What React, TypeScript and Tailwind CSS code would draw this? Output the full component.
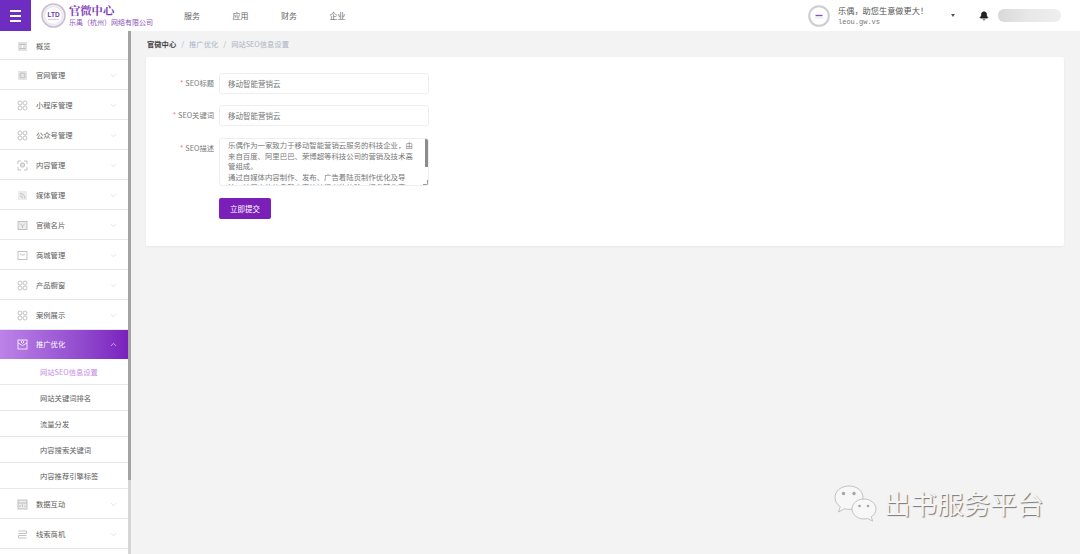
import { ChevronDown, ChevronUp, Bell } from "lucide-react";

const font = { fontFamily: '"Noto Sans CJK SC", "Liberation Sans", sans-serif' };

type IconKind = "ltd" | "site" | "grid" | "face" | "rss" | "card" | "mail" | "promo" | "data" | "lead";

function MenuIcon({ kind, active }: { kind: IconKind; active?: boolean }) {
  const c = active ? "#ffffff" : "#b4b4b4";
  const fill = active ? "none" : "#ececec";
  return (
    <svg width="11" height="11" viewBox="0 0 11 11" fill="none" stroke={c} strokeWidth="0.8">
      {kind === "ltd" && (
        <>
          <path d="M1 2h9M1 9h9" />
          <rect x="2" y="3.6" width="7" height="3.8" />
          <path d="M4 3.6v3.8M7 3.6v3.8" />
        </>
      )}
      {kind === "site" && (
        <>
          <rect x="1" y="1" width="9" height="9" fill="#e4e4e4" stroke="none" />
          <rect x="3.2" y="3.2" width="4.6" height="4.6" rx="1" />
        </>
      )}
      {kind === "grid" && (
        <>
          <circle cx="3" cy="3" r="2" />
          <circle cx="8" cy="3" r="2" />
          <circle cx="3" cy="8" r="2" />
          <circle cx="8" cy="8" r="2" />
        </>
      )}
      {kind === "face" && (
        <>
          <path d="M1 1h3M7 1h3M1 10h3M7 10h3M1 1v3M10 1v3M1 7v3M10 7v3" />
          <circle cx="5.5" cy="5" r="2.2" fill="#e4e4e4" />
        </>
      )}
      {kind === "rss" && (
        <>
          <rect x="1" y="1" width="9" height="9" fill={fill} stroke="none" />
          <path d="M3 3.500a5 5 0 0 1 5 5M3 6a2.500 2.500 0 0 1 2.500 2.500" />
        </>
      )}
      {kind === "card" && (
        <>
          <rect x="1" y="1.500" width="9" height="8" fill={fill} />
          <path d="M3 3.500l2.500 2.500L8 3.500M5.500 6v2" />
        </>
      )}
      {kind === "mail" && (
        <>
          <rect x="1" y="1.500" width="9" height="8" />
          <path d="M3 4q2.500 2.500 5 0" />
        </>
      )}
      {kind === "promo" && (
        <>
          <rect x="1" y="1" width="9" height="9" />
          <path d="M1 4l4.500 2.500L10 4M5.500 1.500l1.500 1.500-1.500 1.500L4 3z" />
        </>
      )}
      {kind === "data" && (
        <>
          <rect x="1" y="1" width="9" height="9" fill={fill} />
          <path d="M1 4h9M3 8V6M5.500 8V5.500M8 8V6.500" />
        </>
      )}
      {kind === "lead" && <path d="M1.500 2h8v2.500h-8M9.500 6.500h-8V9h8" />}
    </svg>
  );
}

function MenuRow({ icon, label, chevron = true, first }: { icon: IconKind; label: string; chevron?: boolean; first?: boolean }) {
  return (
    <div
      className={`flex shrink-0 items-center border-b border-[#e6e6e6] pt-[2px] pr-[10px] pl-[17px] text-[7.3px] text-[#5c5c5c] ${
        first ? "h-[29px]" : "h-[30px]"
      }`}
    >
      <MenuIcon kind={icon} />
      <span className="ml-[8px] flex-1">{label}</span>
      {chevron && <ChevronDown size={9} color="#c4c4c4" strokeWidth={1.2} />}
    </div>
  );
}

function SubRow({ label, active }: { label: string; active?: boolean }) {
  return (
    <div
      className={`flex h-[26px] shrink-0 items-center border-b border-[#e6e6e6] pt-[2px] pl-[40px] text-[7.3px] ${
        active ? "text-[#c68be8]" : "text-[#5c5c5c]"
      }`}
    >
      {label}
    </div>
  );
}

function Sidebar() {
  return (
    <aside className="flex h-full w-[131px] shrink-0 bg-white">
      <div className="flex w-[128px] flex-col overflow-hidden">
        <MenuRow icon="ltd" label="概览" chevron={false} first />
        <MenuRow icon="site" label="官网管理" />
        <MenuRow icon="grid" label="小程序管理" />
        <MenuRow icon="grid" label="公众号管理" />
        <MenuRow icon="face" label="内容管理" />
        <MenuRow icon="rss" label="媒体管理" />
        <MenuRow icon="card" label="官微名片" />
        <MenuRow icon="mail" label="商城管理" />
        <MenuRow icon="grid" label="产品橱窗" />
        <MenuRow icon="grid" label="案例展示" />
        <div className="flex h-[29px] shrink-0 items-center bg-gradient-to-r from-[#bd83e8] to-[#7a1fbd] pl-[17px] pr-[10px] text-[7.3px] text-white">
          <MenuIcon kind="promo" active />
          <span className="ml-[8px] flex-1">推广优化</span>
          <ChevronUp size={9} color="#ffffff" strokeWidth={1.5} />
        </div>
        <SubRow label="网站SEO信息设置" active />
        <SubRow label="网站关键词排名" />
        <SubRow label="流量分发" />
        <SubRow label="内容搜索关键词" />
        <SubRow label="内容推荐引擎标签" />
        <MenuRow icon="data" label="数据互动" />
        <MenuRow icon="lead" label="线索商机" />
      </div>
      <div className="flex w-[3px] flex-col bg-[#d5d5d5]">
        <div className="h-[449px] bg-[#a3a3a3]" />
      </div>
    </aside>
  );
}

function Logo() {
  return (
    <svg width="25" height="25" viewBox="0 0 25 25" fill="none">
      <circle cx="12.500" cy="12.500" r="11.500" fill="#f0ecf3" stroke="#c9bdd4" strokeWidth="1.600" />
      <circle cx="12.500" cy="12.500" r="8.800" fill="#fff" stroke="#e0d8e6" strokeWidth="0.600" />
      <text x="12.500" y="14" textAnchor="middle" fontSize="6.500" fontWeight="700" fill="#6f3aa8" fontFamily="Liberation Sans">
        LTD
      </text>
      <path d="M7 16.500h11" stroke="#c9b8d8" strokeWidth="0.700" />
    </svg>
  );
}

function Header() {
  return (
    <header className="flex h-[31px] shrink-0 items-center bg-white">
      <div className="flex h-full w-[31px] flex-col items-center justify-center gap-[3px] bg-[#6f2cc0]">
        <span className="h-[2px] w-[11px] bg-white" />
        <span className="h-[2px] w-[11px] bg-white" />
        <span className="h-[2px] w-[11px] bg-white" />
      </div>
      <div className="ml-[10px] flex items-center">
        <Logo />
        <div className="ml-[3px] flex flex-col">
          <span className="text-[11.300px] leading-[13px] font-bold text-[#7d3bb8]" style={{ fontFamily: '"Noto Serif CJK SC", "Noto Sans CJK SC", serif' }}>
            官微中心
          </span>
          <span className="text-[7px] leading-[10px] text-[#8a56b8]">乐禹（杭州）网络有限公司</span>
        </div>
      </div>
      <nav className="ml-[31px] flex gap-[32.500px] text-[8px] text-[#666]">
        <span className="w-[16px]">服务</span>
        <span className="w-[16px]">应用</span>
        <span className="w-[16px]">财务</span>
        <span className="w-[16px]">企业</span>
      </nav>
      <div className="ml-auto flex items-center pr-[19px]">
        <svg width="22" height="22" viewBox="0 0 22 22" fill="none">
          <circle cx="11" cy="11" r="9.800" fill="#fff" stroke="#cfcbd3" strokeWidth="2" />
          <path d="M7.500 10.500h7" stroke="#8a4fc0" strokeWidth="1.400" />
          <path d="M6.500 13h9" stroke="#dddddd" strokeWidth="0.800" />
        </svg>
        <div className="ml-[8px] flex w-[113px] flex-col gap-[2px]">
          <span className="text-[8.200px] leading-[11px] text-[#555]">乐偶，助您生意做更大！</span>
          <span className="text-[7px] leading-[9px] text-[#777]" style={{ fontFamily: '"Liberation Mono", monospace' }}>
            leou.gw.vs
          </span>
        </div>
        <span className="h-0 w-0 border-x-[2.500px] border-t-[3px] border-x-transparent border-t-[#555]" />
        <Bell className="ml-[24px]" size={10} fill="#222" color="#222" />
        <div className="ml-[9px] h-[13px] w-[63px] rounded-[6px] bg-gradient-to-r from-[#d9d9d9] via-[#e8e8e8] to-[#eeeeee]" />
      </div>
    </header>
  );
}

function Field({ label, children, className = "" }: { label: string; children: React.ReactNode; className?: string }) {
  return (
    <div className={`flex ${className}`}>
      <label className="mr-[5px] flex h-[21px] w-[68px] items-center justify-end text-[7.3px] text-[#777]">
        <span className="mr-[2px] text-[#f56c6c]">*</span>
        {label}
      </label>
      {children}
    </div>
  );
}

function SeoForm() {
  return (
    <section className="mr-[16px] ml-[15px] flex h-[189px] flex-col rounded-[2px] bg-white pt-[16px] shadow-[0_1px_3px_rgba(0,0,0,0.05)]">
      <div className="flex flex-col gap-[11px]">
        <Field label="SEO标题">
          <div className="flex h-[21px] w-[210px] items-center rounded-[3px] border border-[#eeeeee] pl-[8px] text-[7.500px] text-[#777]">
            移动智能营销云
          </div>
        </Field>
        <Field label="SEO关键词">
          <div className="flex h-[21px] w-[210px] items-center rounded-[3px] border border-[#eeeeee] pl-[8px] text-[7.500px] text-[#777]">
            移动智能营销云
          </div>
        </Field>
        <Field label="SEO描述" className="mt-px">
          <div className="relative h-[48px] w-[210px] overflow-hidden rounded-[3px] border border-[#eeeeee] pt-[1px] pr-[8px] pl-[8px] text-[7.400px] leading-[10.500px] text-[#777]">
            乐偶作为一家致力于移动智能营销云服务的科技企业，由来自百度、阿里巴巴、荣博超等科技公司的营销及技术高管组成。
            <br />
            通过自媒体内容制作、发布、广告着陆页制作优化及导流，社区内的信息和内容让访问者的体验、提升转化率。
            <div className="absolute top-0 right-0 h-[28px] w-[3px] bg-[#8c8c8c]" />
            <div className="absolute right-0 bottom-0 h-[5px] w-[5px] border-r border-b border-[#999]" />
          </div>
        </Field>
      </div>
      <button className="mt-[12px] ml-[73px] h-[21px] w-[52px] rounded-[2px] bg-[#7a1fb8] text-[7.500px] text-white">立即提交</button>
    </section>
  );
}

function Watermark() {
  return (
    <div className="absolute top-[484px] left-[833px] flex items-center">
      <svg width="46" height="38" viewBox="0 0 46 38">
        <g fill="#f7f7f7" stroke="#b5b5b5" strokeWidth="0.800">
          <path d="M16 2c-8 0-14 5-14 11.500 0 3.800 2 7 5.300 9.200L5.500 28l6-3.200c1.500.4 3 .6 4.500.6 8 0 14-5.300 14-11.900S24 2 16 2z" />
          <path d="M31 15c-6.500 0-12 4.300-12 10s5.500 10 12 10c1.200 0 2.500-.2 3.600-.5l5 2.700-1.300-4.500C41.300 30.900 43 28 43 25c0-5.700-5.500-10-12-10z" />
        </g>
        <g fill="#a5a5a5">
          <circle cx="10.500" cy="9.500" r="1.700" />
          <circle cx="21" cy="9.500" r="1.700" />
          <circle cx="26.500" cy="22" r="1.300" />
          <circle cx="35" cy="22" r="1.300" />
        </g>
      </svg>
      <span className="ml-[5px] text-[26.600px] leading-none text-[#f4f4f4] [text-shadow:1px_1px_1px_#777777]">出书服务平台</span>
    </div>
  );
}

export default function App() {
  return (
    <div className="relative flex h-[554px] w-[1080px] flex-col overflow-hidden bg-[#f3f3f3]" style={font}>
      <Header />
      <div className="flex min-h-0 flex-1">
        <Sidebar />
        <main className="min-w-0 flex-1">
          <div className="flex h-[26px] items-center gap-[5px] px-[16px] text-[7.300px] text-[#a9b4c4]">
            <span className="font-bold text-[#444]">官微中心</span>
            <span>/</span>
            <span>推广优化</span>
            <span>/</span>
            <span>网站SEO信息设置</span>
          </div>
          <SeoForm />
        </main>
      </div>
      <Watermark />
    </div>
  );
}
